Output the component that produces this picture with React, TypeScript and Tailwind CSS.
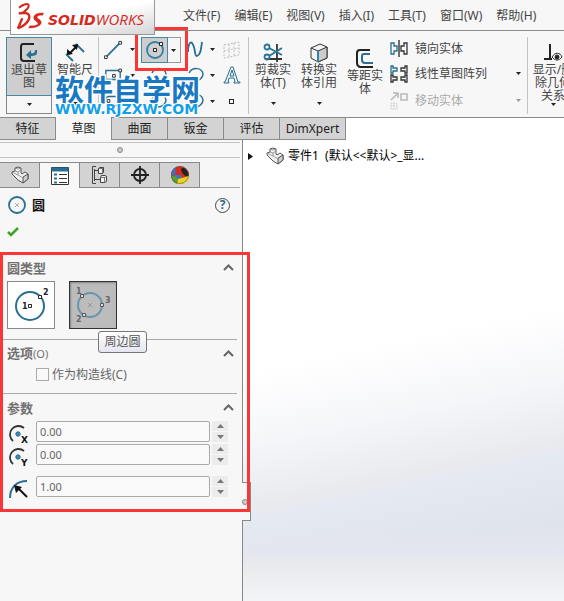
import type { ReactNode } from "react"

const menus = ["文件(F)", "编辑(E)", "视图(V)", "插入(I)", "工具(T)", "窗口(W)", "帮助(H)"]
const tabs = ["特征", "草图", "曲面", "钣金", "评估"]

const Caret = ({ light = false }: { light?: boolean }) => (
    <svg width="5" height="3" viewBox="0 0 5 3" className={light ? "text-[#999]" : "text-[#222]"}>
        <path d="M0 0h5L2.500 3z" fill="currentColor" />
    </svg>
)

const DropButton = ({ label, light }: { label: string; light?: boolean }) => (
    <button aria-label={label} className="flex h-5 w-3 shrink-0 items-center justify-center">
        <Caret light={light} />
    </button>
)

const Divider = () => <div className="w-px shrink-0 self-stretch bg-[#c4c4c4]" />

const Logo = () => (
    <div className="absolute top-0 left-[10px] flex h-[35px] w-[145px] items-center border border-t-0 border-[#999] bg-linear-to-br from-white from-50% to-[#d5d5d5] pl-[5px]">
        <svg width="30" height="30" viewBox="0 0 90 90" fill="none" stroke="#d5281e" className="shrink-0">
            <path d="M9 17C19 9 33 3 37 8c5 7-8 19-19 26" strokeWidth="6" />
            <path d="M8 34c16-2 31-2 32 9C41 57 24 73 6 79L19 49" strokeWidth="7" strokeLinejoin="bevel" />
            <path d="M83 33L80 40c-9-1-15 1-17 5 0 5 12 8 13 15 0 13-18 18-38 18l3-7c12 1 23-1 25-6 1-6-13-9-13-18 1-11 14-15 30-14z" fill="#d5281e" strokeWidth="1" />
        </svg>
        <span className="mt-[4px] ml-[2px] flex items-baseline leading-4 whitespace-nowrap text-[#d5281e] italic">
            <span className="font-['DejaVu_Sans',sans-serif] text-[14px] font-bold">SOLID</span>
            <span className="font-['Open_Sans',sans-serif] text-[15px]">WORKS</span>
        </span>
    </div>
)

const PartIcon = () => (
    <svg width="18" height="18" viewBox="0 0 18 18" fill="#f1f1f1" stroke="#555" strokeLinejoin="round">
        <path d="M1 6l3-1V2l3-1 3 1v5l1 1 3-2 3 2v5l-5 4-5-3-6-6z" />
        <path d="M12 11l5-3v5l-5 4z" fill="#cfcfcf" />
        <path d="M4 5l3 1 3-2M7 6v3l5 3M4 2l3 1 3-1M1 6l6 3" fill="none" stroke="#888" strokeWidth=".8" />
    </svg>
)

const LineIcon = () => (
    <svg width="20" height="20" viewBox="0 0 20 20" fill="none" stroke="#222">
        <path d="M3 17L17 3" stroke="#286f92" strokeWidth="2" />
        <path d="M.5 16.500h3v3h-3zM16.500.5h3v3h-3z" fill="#fff" />
    </svg>
)

const RectIcon = () => (
    <svg width="20" height="16" viewBox="0 0 20 16" fill="none" stroke="#222">
        <path d="M2 14V3h16v10H2" stroke="#286f92" strokeWidth="1.500" />
        <path d="M16.500 1.500h3v3h-3zM9.500 7.500h3v3h-3z" fill="#fff" />
    </svg>
)

const SlotIcon = () => (
    <svg width="20" height="16" viewBox="0 0 20 16" fill="none" stroke="#222">
        <path d="M5 3h8a5 5 0 010 10H7a5 5 0 01-2-10z" stroke="#286f92" strokeWidth="1.500" />
        <path d="M3.500 6.500h3v3h-3z" fill="#fff" />
    </svg>
)

const CircleIcon = () => (
    <svg width="20" height="20" viewBox="0 0 20 20" fill="none" stroke="#222">
        <circle cx="10" cy="10" r="8" stroke="#3380a5" strokeWidth="1.800" />
        <path d="M8.500 8.500h3v3h-3zM14.500 2.500h3v3h-3z" fill="#fff" />
    </svg>
)

const ArcIcon = ({ className }: { className?: string }) => (
    <svg width="18" height="16" viewBox="0 0 18 16" fill="none" stroke="#286f92" strokeWidth="1.500" className={className}>
        <path d="M2 6C5 0 15 0 16 7c0 4-4 7-8 7" />
    </svg>
)

const SplineIcon = () => (
    <svg width="16" height="17" viewBox="0 0 16 17" fill="none" stroke="#286f92" strokeWidth="1.800">
        <path d="M1 11C1 4 3 0 5 2c4 5 2 13 5 13 4-1 4-8 5-14" />
    </svg>
)

const PlaneIcon = () => (
    <svg width="17" height="18" viewBox="0 0 17 18" fill="none" stroke="#bbb" strokeDasharray="2 1.500">
        <path d="M1 4l15-3v13L1 17zM6 3v13M11 2v13M1 10l15-3" />
    </svg>
)

const LetterIcon = () => (
    <svg width="18" height="18" viewBox="0 0 18 18" fill="none" stroke="#286f92">
        <path d="M8 1h2l5 15h2v1h-6v-1h1l-1-4H6l-1 4h1v1H1v-1h1zM7 10h4L9 4z" />
    </svg>
)

const ExitIcon = () => (
    <svg width="20" height="20" viewBox="0 0 20 20" fill="none">
        <path d="M15 1H4Q2 1 2 4v11q0 3 3 3h11" stroke="#222" strokeWidth="2" />
        <path d="M18 7v3q0 3-6 3v3L7 12l5-5v3q4 1 4-3z" fill="#286f92" />
    </svg>
)

const DimensionIcon = () => (
    <svg width="20" height="19" viewBox="0 0 20 19" fill="none">
        <path d="M11 1l8 8M1 11l7 7" stroke="#286f92" strokeWidth="1.800" />
        <path d="M4 11L12 3" stroke="#111" strokeWidth="2" />
        <path d="M7 2l6-1-1 6zM2 6l6 5-6 1z" fill="#111" />
    </svg>
)

const TrimIcon = () => (
    <svg width="20" height="20" viewBox="0 0 20 20" fill="none">
        <path d="M14 1v18M2 16h17" stroke="#333" strokeWidth="1.800" />
        <g stroke="#2a7395" strokeWidth="1.800">
            <circle cx="4" cy="4" r="2.500" />
            <circle cx="4" cy="14" r="2.500" />
            <path d="M6 5l13 7M6 13l13-8" />
        </g>
    </svg>
)

const ConvertIcon = () => (
    <svg width="18" height="20" viewBox="0 0 18 20" stroke="#333" strokeLinejoin="round">
        <path d="M1 5l9-4 7 3v11l-9 4-7-4z" fill="#f4f4f4" />
        <path d="M8 8l9-4v11l-9 4z" fill="#ccc" />
        <path d="M1 5l7 3" />
        <path d="M8 8v11" stroke="#2d88b1" strokeWidth="2" />
    </svg>
)

const OffsetIcon = () => (
    <svg width="18" height="19" viewBox="0 0 18 19" fill="none" strokeWidth="2">
        <path d="M14 1H4Q1 1 1 4v10q0 3 3 4h13" stroke="#222" />
        <path d="M14 5H8Q6 5 6 7v4q0 3 3 3h8" stroke="#286f92" />
    </svg>
)

const MirrorIcon = () => (
    <svg width="18" height="17" viewBox="0 0 18 17" fill="none" strokeWidth="1.300">
        <path d="M9 0v17" stroke="#222" />
        <path d="M1 3h3v3h3v5H4v3H1z" stroke="#286f92" />
        <path d="M17 3h-3v3h-3v5h3v3h3z" stroke="#333" />
    </svg>
)

const PatternIcon = () => (
    <svg width="18" height="18" viewBox="0 0 18 18" fill="none" strokeWidth="1.300">
        <path d="M1 1h2v2h4v3H3v2H1z" stroke="#286f92" />
        <path d="M17 1h-2v2h-4v3h4v2h2zM1 10h2v2h4v3H3v2H1zM17 10h-2v2h-4v3h4v2h2z" stroke="#333" />
    </svg>
)

const MoveIcon = () => (
    <svg width="18" height="18" viewBox="0 0 18 18" fill="none" stroke="#bbb" strokeWidth="1.600">
        <path d="M1 8l6-6M3 1h5v5M11 2h6v6h-6z" />
        <path d="M1 11h6v6H1zM4 11v6M1 14h6" strokeDasharray="1.500 1" strokeWidth="1" stroke="#ccc" />
    </svg>
)

const RelationIcon = () => (
    <svg width="20" height="18" viewBox="0 0 20 18" fill="none" stroke="#222">
        <path d="M7 0v15M1 15h8" strokeWidth="2" />
        <path d="M9 13c3-5 8-5 10 0-3 4-7 4-10 0z" fill="#fff" />
        <circle cx="14" cy="13" r="2" fill="#222" />
    </svg>
)

const BigTool = ({ icon, lines, className }: { icon: ReactNode; lines: string[]; className?: string }) => (
    <div className={`flex shrink-0 flex-col items-center justify-between ${className ?? ""}`}>
        <button className="flex flex-col items-center leading-[13px]">
            <span className="flex h-[21px] items-center">{icon}</span>
            {lines.map((line) => (
                <span key={line} className="whitespace-nowrap">{line}</span>
            ))}
        </button>
        <Caret />
    </div>
)

const Toolbar = () => (
    <div className="relative flex h-[87px] items-stretch border-b border-[#8a8a8a] pt-[6px] pb-[3px] pl-[6px]">
        <div className="flex w-[46px] shrink-0 flex-col border border-[#888]">
            <button className="-m-px flex h-[59px] flex-col items-center border border-[#4488aa] bg-[#cecece] pt-[5px] leading-[13px]">
                <ExitIcon />
                <span className="whitespace-nowrap">退出草</span>
                <span>图</span>
            </button>
            <button aria-label="退出草图选项" className="flex flex-1 items-center justify-center">
                <Caret />
            </button>
        </div>
        <BigTool icon={<DimensionIcon />} lines={["智能尺"]} className="w-[46px] pt-[5px] pb-[9px]" />
        <Divider />
        <div className="ml-[5px] grid shrink-0 grid-cols-[34px_49px_36px_25px] grid-rows-3 items-center">
            <div className="flex items-center gap-1"><LineIcon /><DropButton label="直线选项" /></div>
            <div className="ml-[3px] flex h-[26px] w-[40px] self-start border border-[#999]">
                <button aria-label="圆" className="-m-px flex w-[27px] items-center justify-center border border-[#4488aa] bg-[#cecece]"><CircleIcon /></button>
                <button aria-label="圆选项" className="flex flex-1 items-center justify-center"><Caret /></button>
            </div>
            <div className="flex items-center gap-[3px]"><SplineIcon /><DropButton label="样条曲线选项" /></div>
            <PlaneIcon />
            <div className="flex items-center gap-1"><RectIcon /><DropButton label="矩形选项" /></div>
            <ArcIcon className="ml-3" />
            <div className="flex items-center gap-px"><ArcIcon /><DropButton label="椭圆选项" /></div>
            <LetterIcon />
            <div className="flex items-center gap-1"><SlotIcon /><DropButton label="槽口选项" /></div>
            <ArcIcon className="ml-3" />
            <div className="flex items-center gap-px"><ArcIcon /><DropButton label="圆角选项" /></div>
            <span className="ml-[6px] size-[5px] border border-[#222]" />
        </div>
        <Divider />
        <BigTool icon={<TrimIcon />} lines={["剪裁实", "体(T)"]} className="ml-px w-[46px] pt-[5px] pb-[9px]" />
        <BigTool icon={<ConvertIcon />} lines={["转换实", "体引用"]} className="w-[46px] pt-[5px] pb-[9px]" />
        <button className="flex w-[46px] shrink-0 flex-col items-center pt-3 leading-[13px]">
            <OffsetIcon />
            <span className="mt-px whitespace-nowrap">等距实</span>
            <span>体</span>
        </button>
        <div className="ml-[2px] flex w-[134px] shrink-0 flex-col justify-around">
            <button className="flex items-center gap-[7px]"><MirrorIcon />镜向实体</button>
            <div className="flex items-center justify-between">
                <button className="flex items-center gap-[7px]"><PatternIcon />线性草图阵列</button>
                <DropButton label="阵列选项" />
            </div>
            <div className="flex items-center justify-between text-[#aaa]">
                <button className="flex items-center gap-[7px]"><MoveIcon />移动实体</button>
                <DropButton label="移动选项" light />
            </div>
        </div>
        <div className="w-[3px] shrink-0" />
        <Divider />
        <BigTool icon={<RelationIcon />} lines={["显示/删", "除几何", "关系"]} className="ml-1 w-[42px] pt-[5px] pb-[8px]" />

        <div className="pointer-events-none absolute -top-1 left-[135px] h-[44px] w-[53px] border-[3px] border-[#fb3636]" />
        <div className="pointer-events-none absolute top-[42px] left-[55px] whitespace-nowrap text-[#1a78c2]">
            <p className="font-['Noto_Sans_CJK_SC',sans-serif] text-[29px] leading-[30px] font-bold [paint-order:stroke_fill] [-webkit-text-stroke:3px_#fff]">软件自学网</p>
            <p className="font-['DejaVu_Sans',sans-serif] text-[14px] leading-[12px] font-bold text-[#12a0e8] [paint-order:stroke_fill] [-webkit-text-stroke:2px_#fff]">WWW.RJZXW.COM</p>
        </div>
    </div>
)

const ListIcon = () => (
    <svg width="18" height="18" viewBox="0 0 18 18" fill="#fff" stroke="#333">
        <path d="M.5.5h17v17H.5z" />
        <path d="M1 1h16v3H1z" fill="#286f92" stroke="#286f92" />
        <path d="M3 7.500h3M3 11.500h3M3 15.500h3" stroke="#286f92" strokeWidth="2" />
        <path d="M8 7.500h8M8 11.500h8M8 15.500h8" strokeWidth="1" />
    </svg>
)

const ConfigIcon = () => (
    <svg width="15" height="18" viewBox="0 0 15 18" fill="#f2f2f2" stroke="#444">
        <path d="M4 .5H.5v17H4M2.500 3v12M2.500 4.500H7M2.500 13.500H8" fill="none" />
        <path d="M6.500 2.500l1-1h4v5l-1 1h-4zM8.500 11.500l1-2h4l1 1v5l-2 1h-4z" />
        <path d="M6.500 2.500h4v5M10.500 2.500l1-1M8.500 11.500h4v5M12.500 11.500l2-1" fill="none" strokeWidth=".7" />
    </svg>
)

const TargetIcon = () => (
    <svg width="18" height="18" viewBox="0 0 18 18" fill="none" stroke="#222" strokeWidth="1.800">
        <circle cx="9" cy="9" r="6" />
        <path d="M9 0v18M0 9h18" />
    </svg>
)

const BallIcon = () => (
    <svg width="18" height="18" viewBox="0 0 18 18">
        <circle cx="9" cy="9" r="9" fill="#d62b20" />
        <path d="M0 9A9 9 0 015 1L4 9q-2 1-4 0z" fill="#3579cc" />
        <path d="M4 9h6l1 3-4 1q-3-1-3-4z" fill="#3579cc" />
        <path d="M0 9q2 2 4 1l3 3-1 5Q0 16 0 9z" fill="#58a52d" />
        <path d="M7 13q4-1 11-3 0 7-8 8H6z" fill="#f0d51c" />
        <path d="M10 3c3-3 7 1 8 6-3 3-7-1-8-6z" fill="#222" />
        <circle cx="9" cy="9" r="8.500" fill="none" stroke="#555" strokeWidth=".6" />
    </svg>
)

const panelTabs = [
    { label: "特征树", icon: <PartIcon /> },
    { label: "属性", icon: <ListIcon /> },
    { label: "配置", icon: <ConfigIcon /> },
    { label: "尺寸专家", icon: <TargetIcon /> },
    { label: "外观", icon: <BallIcon /> },
]

const SectionHeader = ({ title }: { title: ReactNode }) => (
    <button className="flex h-[27px] w-full items-center justify-between pr-[3px] pl-1 text-[13px] text-[#707070]">
        <span>{title}</span>
        <svg width="11" height="7" viewBox="0 0 11 7" fill="none" stroke="#666" strokeWidth="2">
            <path d="M1 6l4.500-4.500L10 6" />
        </svg>
    </button>
)

const CenterCircleIcon = () => (
    <svg width="46" height="46" viewBox="0 0 46 46" fill="none" stroke="#222">
        <circle cx="22" cy="24" r="14" stroke="#286f92" strokeWidth="2" />
        <path d="M20.500 22.500h3v3h-3zM30.500 13.500h3v3h-3z" fill="#fff" />
        <g fill="#222" stroke="none" fontFamily="DejaVu Sans" fontSize="8" fontWeight="bold">
            <text x="14" y="27">1</text>
            <text x="35" y="13">2</text>
        </g>
    </svg>
)

const PerimeterCircleIcon = () => (
    <svg width="46" height="46" viewBox="0 0 46 46" fill="none" stroke="#555">
        <circle cx="20" cy="23" r="12" stroke="#6696ae" strokeWidth="2" />
        <path d="M10.500 12.500h3v3h-3zM30.500 21.500h3v3h-3zM12.500 31.500h3v3h-3z" fill="#ddd" />
        <path d="M18 21l4 4M22 21l-4 4" stroke="#999" />
        <g fill="#666" stroke="none" fontFamily="DejaVu Sans" fontSize="8" fontWeight="bold">
            <text x="6" y="12">1</text>
            <text x="6" y="40">2</text>
            <text x="35" y="21">3</text>
        </g>
    </svg>
)

const AxisIcon = ({ axis }: { axis: string }) => (
    <svg width="20" height="20" viewBox="0 0 20 20" fill="none">
        <path d="M4 17A8 8 0 0115 4" stroke="#333" strokeWidth="1.800" />
        <circle cx="9" cy="10" r="2.200" fill="#3a8cb5" stroke="#286f92" />
        <text x="12" y="19" fill="#111" fontFamily="DejaVu Sans" fontSize="9" fontWeight="bold">{axis}</text>
    </svg>
)

const RadiusIcon = () => (
    <svg width="20" height="20" viewBox="0 0 20 20" fill="none">
        <path d="M1 19C1 8 8 2 18 2" stroke="#286f92" strokeWidth="2" />
        <path d="M18 18L9 9" stroke="#111" strokeWidth="2" />
        <path d="M5 6l8 2-6 6z" fill="#111" />
    </svg>
)

const params = [
    { label: "圆心 X 坐标", value: "0.00", icon: <AxisIcon axis="X" />, gap: "" },
    { label: "圆心 Y 坐标", value: "0.00", icon: <AxisIcon axis="Y" />, gap: "mt-[2px]" },
    { label: "半径", value: "1.00", icon: <RadiusIcon />, gap: "mt-[11px]" },
]

const ParamRow = ({ label, value, icon, gap }: (typeof params)[number]) => (
    <div className={`flex h-[21px] items-center pl-[6px] ${gap}`}>
        <span className="mt-1 mr-[7px] shrink-0">{icon}</span>
        <input aria-label={label} defaultValue={value} className="h-[21px] w-0 flex-1 rounded-[2px] border border-[#aaa] bg-[#f9f9f9] px-[3px] text-[11px] text-[#666]" />
        <div className="mr-[9px] ml-[2px] flex h-full w-4 flex-col gap-px">
            <button aria-label={`增大${label}`} className="flex flex-1 items-center justify-center bg-[#ececec]">
                <svg width="7" height="4" viewBox="0 0 7 4"><path d="M0 4l3.500-4L7 4z" fill="#777" /></svg>
            </button>
            <button aria-label={`减小${label}`} className="flex flex-1 items-center justify-center bg-[#ececec]">
                <svg width="7" height="4" viewBox="0 0 7 4"><path d="M0 0l3.500 4L7 0z" fill="#777" /></svg>
            </button>
        </div>
    </div>
)

const PropertyPanel = () => (
    <aside className="relative w-[243px] shrink-0 border-r border-[#888] bg-[#f7f7f7]">
        <div className="mt-[2px] mr-[2px] flex h-4 items-center justify-center border-y border-[#c4c4c4]">
            <span className="size-[6px] rounded-full border border-[#888] bg-[#ccc]" />
        </div>
        <div className="mt-1 mr-[2px] flex h-[26px]">
            {panelTabs.map((tab, i) => (
                <button
                    key={tab.label}
                    aria-label={tab.label}
                    className={`flex w-10 items-center justify-center border-t border-r border-[#8a8a8a] ${i === 1 ? "bg-[#f7f7f7]" : "border-b bg-[#d3d3d3]"}`}
                >
                    {tab.icon}
                </button>
            ))}
            <div className="flex-1 border-b border-[#aaa]" />
        </div>
        <div className="flex h-[34px] items-center pr-3 pl-2">
            <svg width="18" height="18" viewBox="0 0 18 18" fill="none">
                <circle cx="9" cy="9" r="8" stroke="#286f92" strokeWidth="1.800" />
                <path d="M7 7l4 4M11 7l-4 4" stroke="#999" strokeWidth=".8" />
            </svg>
            <h1 className="ml-[6px] flex-1 text-[13px] font-bold text-[#111]">圆</h1>
            <button aria-label="帮助" className="flex size-[15px] items-center justify-center rounded-full border border-[#444] text-[12px] font-bold text-[#286f92]">?</button>
        </div>
        <div className="flex h-[30px] pt-1 pl-[7px]">
            <button aria-label="确定" className="h-3">
                <svg width="12" height="10" viewBox="0 0 12 10" fill="none"><path d="M1 5l3 3 7-7" stroke="#3ea321" strokeWidth="2.500" /></svg>
            </button>
        </div>
        <div className="relative h-[260px] pt-[2px] pl-[3px]">
            <section className="mr-[5px] border-b border-[#aaa] pb-[10px]">
                <SectionHeader title={<b>圆类型</b>} />
                <div className="relative flex gap-[14px] pl-1">
                    <button aria-label="圆" className="size-12 border border-[#888] bg-white"><CenterCircleIcon /></button>
                    <button aria-label="周边圆" className="size-12 border border-[#333] bg-[#bcbcbc] shadow-[inset_1px_1px_2px_#888]"><PerimeterCircleIcon /></button>
                    <div role="tooltip" className="absolute top-[50px] left-[95px] z-10 flex h-[22px] w-[49px] items-center justify-center rounded-[3px] border border-[#777] bg-linear-to-b from-white to-[#e4e5f0] text-[#555]">周边圆</div>
                </div>
            </section>
            <section className="mr-[5px] border-b border-[#aaa] pb-[11px]">
                <SectionHeader title={<><b>选项</b><span className="text-[11px]">(O)</span></>} />
                <label className="flex h-[15px] items-center gap-[3px] pl-[33px] text-[#666]">
                    <input type="checkbox" className="size-[13px] appearance-none border border-[#aaa] bg-[#f9f9f9]" />
                    作为构造线(C)
                </label>
            </section>
            <section className="mr-[5px]">
                <SectionHeader title={<b>参数</b>} />
                {params.map((p) => <ParamRow key={p.label} {...p} />)}
            </section>
            <div className="absolute top-[230px] -right-[9px] z-10 flex h-[39px] w-[9px] items-center border border-l-0 border-[#888] bg-[#f7f7f7]">
                <span className="size-[6px] rounded-full border border-[#888] bg-[#ccc]" />
            </div>
            <div className="pointer-events-none absolute inset-y-0 -right-2 left-0 z-20 border-[3px] border-[#fb3636]" />
        </div>
    </aside>
)

export default function App() {
    return (
        <div className="flex min-h-screen flex-col overflow-hidden bg-[#f7f7f7] font-['Noto_Sans','Noto_Sans_CJK_SC',sans-serif] text-[12px] leading-4 text-[#444]">
            <header className="relative z-10 flex h-[31px] shrink-0 items-center border-b border-[#8a8a8a] pt-px pl-[183px]">
                <Logo />
                <nav className="flex gap-[14px]">
                    {menus.map((menu) => (
                        <button key={menu} className="whitespace-nowrap">{menu}</button>
                    ))}
                </nav>
            </header>
            <Toolbar />
            <div className="flex h-[22px] shrink-0 bg-white text-[#222]">
                {tabs.map((tab) => (
                    <button
                        key={tab}
                        className={`w-14 border-r border-[#8a8a8a] ${tab === "草图" ? "z-10 -mt-px bg-[#f7f7f7] pt-px" : "border-b bg-[#d3d3d3]"}`}
                    >
                        {tab}
                    </button>
                ))}
                <button className="w-[66px] border-r border-b border-[#8a8a8a] bg-[#d3d3d3]">DimXpert</button>
            </div>
            <div className="flex flex-1">
                <PropertyPanel />
                <main className="min-w-0 flex-1 bg-[linear-gradient(to_bottom,transparent_84%,#e4e7ef_90%,#e9eaee_92%,#f3f4f8_100%),linear-gradient(168deg,#fff_44%,#f5f6f9_58%,#e9eaee_70%,#e5e9f1_72%,#dfe3ec_86%,#e2e5ee_100%)]">
                    <div className="flex h-8 items-center pl-[5px] text-black">
                        <svg width="5" height="7" viewBox="0 0 5 7"><path d="M0 0l5 3.500L0 7z" fill="#111" /></svg>
                        <span className="mr-1 ml-[13px]"><PartIcon /></span>
                        <span className="whitespace-pre">零件1  (默认&lt;&lt;默认&gt;_显...</span>
                    </div>
                </main>
            </div>
        </div>
    )
}
